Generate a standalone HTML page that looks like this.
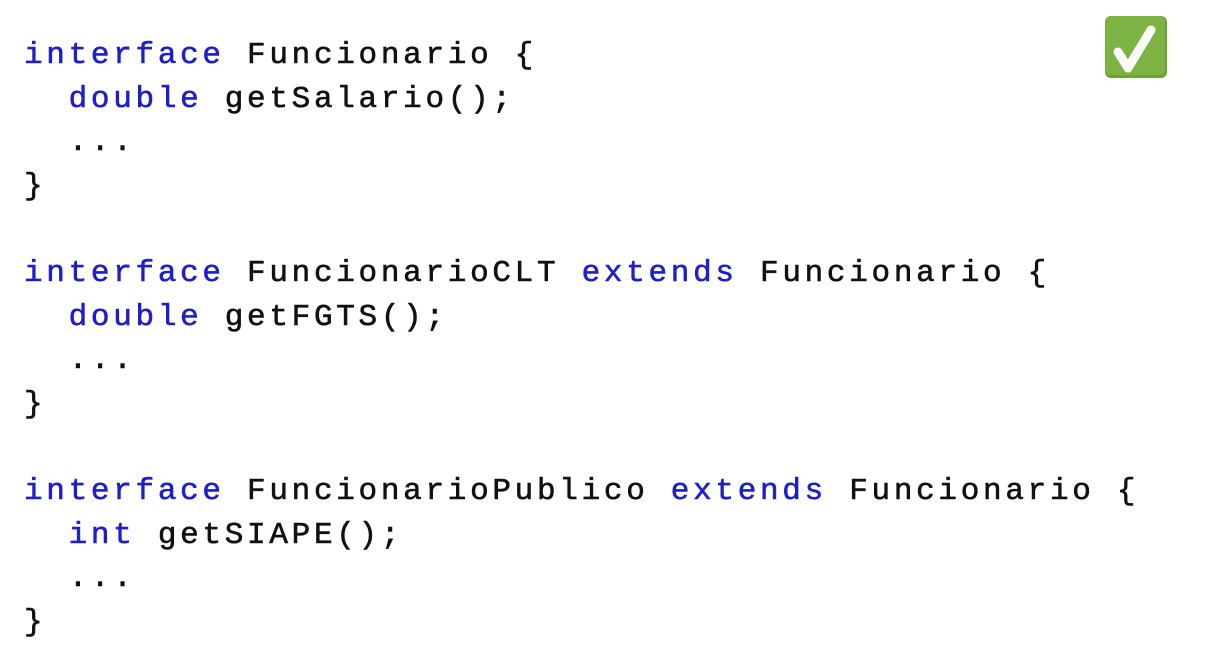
<!DOCTYPE html>
<html><head><meta charset="utf-8"><style>
html,body{margin:0;padding:0;background:#fff;width:1231px;height:646px;overflow:hidden}
pre{position:absolute;left:24px;top:34px;margin:0;font-family:"Liberation Mono","DejaVu Sans Mono",monospace;font-size:31px;letter-spacing:3.7px;line-height:43.6px;color:#111;-webkit-text-stroke:0.6px #111}
.k{color:#1f1fc8;-webkit-text-stroke:0.6px #1f1fc8}
.chk{position:absolute;left:1104px;top:15px;width:64px;height:64px}
</style></head><body>
<pre><span class="k">interface</span> Funcionario {
  <span class="k">double</span> getSalario();
  ...
}

<span class="k">interface</span> FuncionarioCLT <span class="k">extends</span> Funcionario {
  <span class="k">double</span> getFGTS();
  ...
}

<span class="k">interface</span> FuncionarioPublico <span class="k">extends</span> Funcionario {
  <span class="k">int</span> getSIAPE();
  ...
}</pre>
<svg class="chk" viewBox="0 0 64 64">
<rect x="1" y="1" width="62" height="62" rx="6" fill="#6aa437"/>
<rect x="1" y="1" width="60" height="59" rx="6" fill="#7cb342"/>
<path d="M14 37 L24 53 L47 15" fill="none" stroke="#fbf9fb" stroke-width="9" stroke-linecap="round" stroke-linejoin="round"/>
</svg>
</body></html>
